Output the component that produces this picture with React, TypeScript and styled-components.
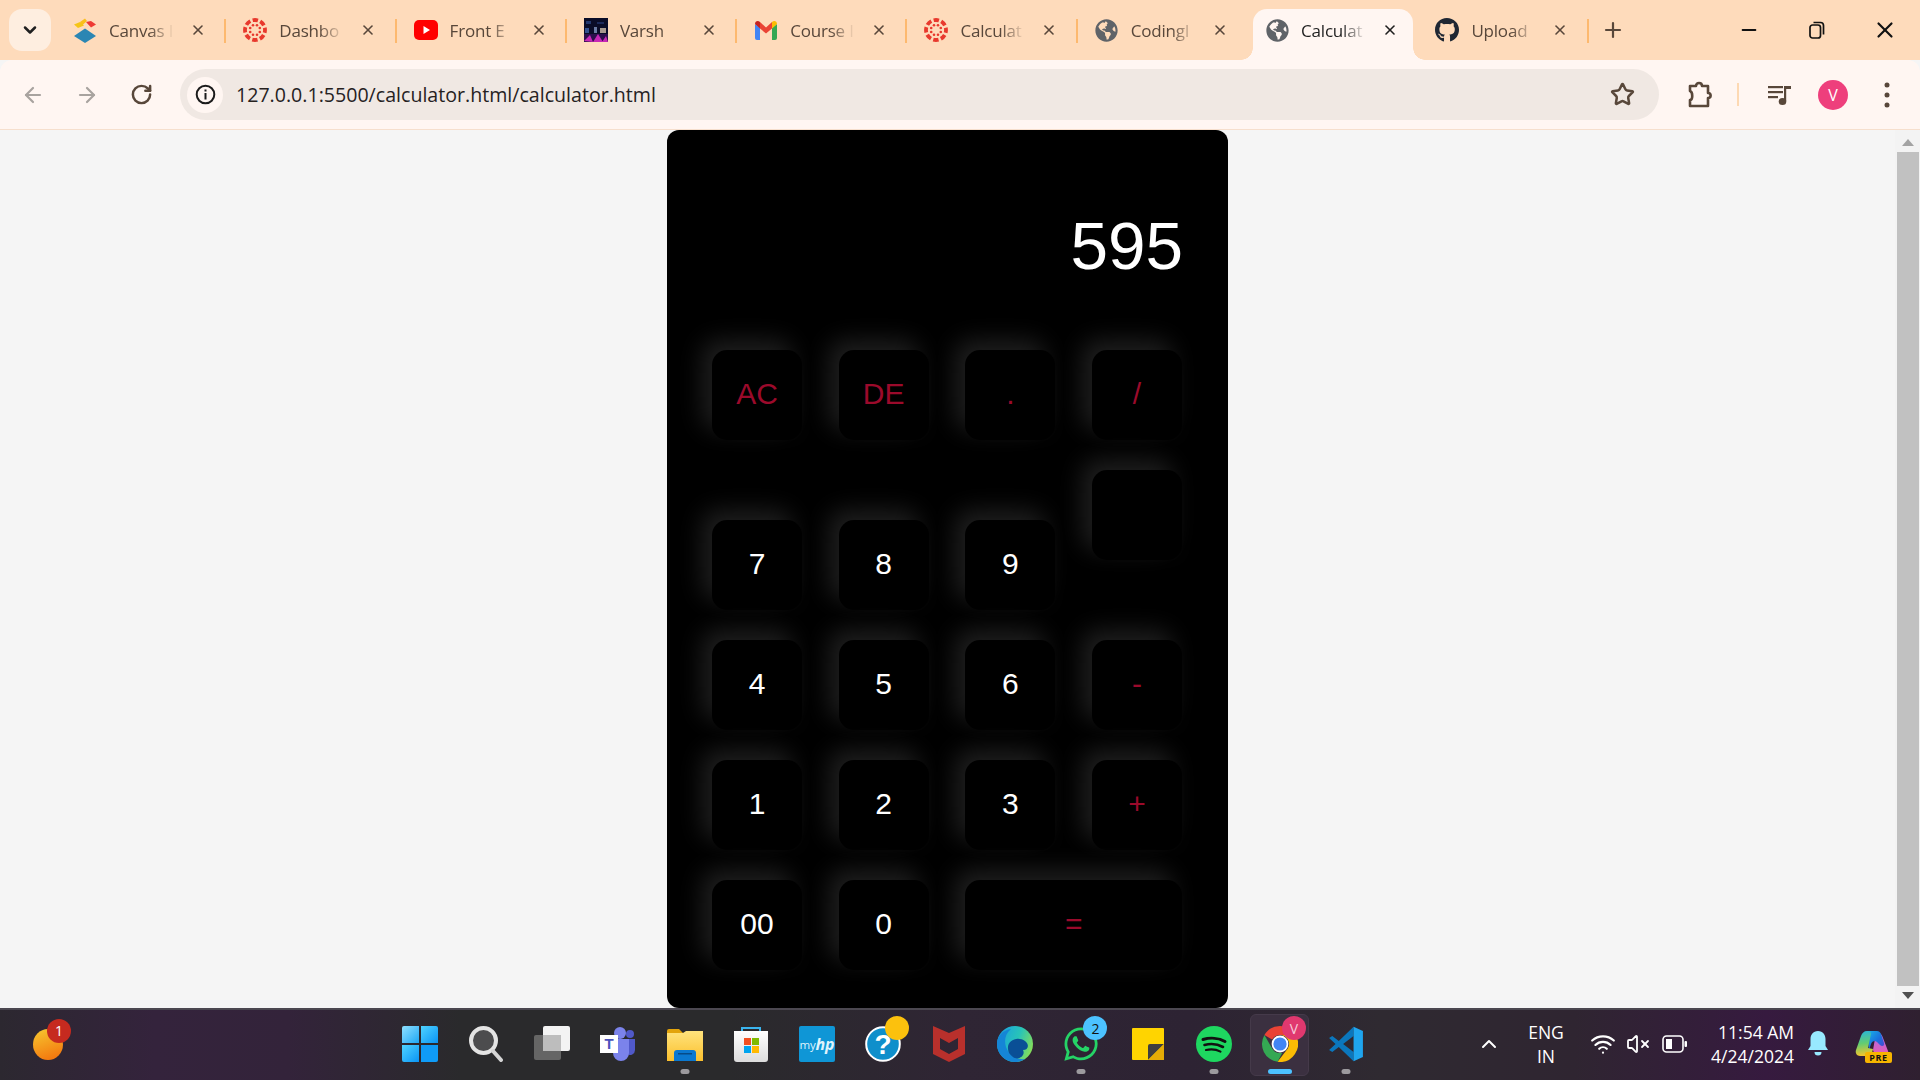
import React from "react";
import styled, { createGlobalStyle } from "styled-components";
import {
  ArrowLeft, ArrowRight, RotateCw, Star, ChevronDown, ChevronUp, X, Plus, Minus, Wifi, VolumeX,
} from "lucide-react";
import { FaGithub, FaGlobeAmericas, FaWhatsapp } from "react-icons/fa";

const Global = createGlobalStyle`
  html, body { margin: 0; padding: 0; height: 100%; overflow: hidden; background: #f5f5f5; }
  #root { height: 100%; }
  * { box-sizing: border-box; }
`;

const UI = `"Open Sans", "Noto Sans", "Liberation Sans", sans-serif`;

const Shell = styled.div`
  width: 1920px; height: 1080px; display: flex; flex-direction: column; overflow: hidden; font-family: ${UI};
`;

/* ---------- tab strip ---------- */
const TabStrip = styled.div`
  height: 60px; flex: none; background: #fedbbb; display: flex; align-items: stretch; padding-left: 9px;
`;
const TabSearch = styled.div`
  width: 42px; height: 42px; margin: 9px 5px 0 0; border-radius: 13px; background: #feeee0; color: #1f1f1f;
  display: flex; align-items: center; justify-content: center;
`;
const Tab = styled.div<{ $active?: boolean }>`
  position: relative; width: 168.3px; flex: none; display: flex; align-items: center; padding: 2px 0 0 17px;
  & > * { position: relative; z-index: 1; }
  ${(p) => p.$active && `
    &::before {
      content: ""; position: absolute; left: 5px; right: 3px; top: 9px; bottom: 0;
      background: #fff6f2; border-radius: 14px 14px 0 0;
    }
  `}
`;
const Flare = styled.i<{ $side: "left" | "right" }>`
  position: absolute !important; bottom: 0; width: 12px; height: 12px;
  ${(p) => p.$side === "left"
    ? `left: -7px; background: radial-gradient(circle at 0 0, transparent 11.5px, #fff6f2 12px);`
    : `right: -9px; background: radial-gradient(circle at 100% 0, transparent 11.5px, #fff6f2 12px);`}
`;
const TabSep = styled.div<{ $hidden?: boolean }>`
  width: 2px; height: 24px; margin-top: 19px; flex: none; background: ${(p) => (p.$hidden ? "transparent" : "#fdb96f")};
`;
const Fav = styled.span`
  width: 24px; height: 24px; flex: none; display: flex; align-items: center; justify-content: center; margin-top: -2px;
`;
const TabTitle = styled.span<{ $active?: boolean }>`
  width: 65px; margin-left: 12px; flex: none; white-space: nowrap; font-size: 17px; line-height: 22px; letter-spacing: -0.2px;
  color: ${(p) => (p.$active ? "#1f1f1f" : "#58473a")};
  -webkit-mask-image: linear-gradient(90deg, #000 62%, transparent 100%);
  mask-image: linear-gradient(90deg, #000 62%, transparent 100%);
`;
const TabClose = styled.span<{ $active?: boolean }>`
  width: 16px; height: 16px; margin: -2px 0 0 16px; flex: none; display: flex; align-items: center; justify-content: center;
  color: ${(p) => (p.$active ? "#1f1f1f" : "#58473a")};
`;
const NewTab = styled.div`
  width: 40px; margin-left: 4px; color: #58473a; display: flex; align-items: center; justify-content: center;
`;
const WinControls = styled.div`
  margin-left: auto; display: flex; padding-right: 1px;
`;
const WinBtn = styled.div`
  width: 68px; height: 60px; color: #111; display: flex; align-items: center; justify-content: center;
`;

/* ---------- toolbar ---------- */
const Toolbar = styled.div`
  height: 70px; flex: none; background: #fff6f2; border-bottom: 1px solid #f6dfcd; border-radius: 12px 12px 0 0;
  display: flex; align-items: center; padding-left: 6px; color: #58473a;
`;
const ToolBtn = styled.div<{ $muted?: boolean; $gap?: number }>`
  width: 54px; height: 54px; flex: none; display: flex; align-items: center; justify-content: center;
  margin-left: ${(p) => p.$gap ?? 0}px;
  color: ${(p) => (p.$muted ? "#a8a39f" : "#58473a")};
`;
const Omnibox = styled.div`
  width: 1479px; height: 51px; margin-left: 12px; border-radius: 26px; background: #f0e8e3; flex: none;
  display: flex; align-items: center; padding: 0 24px 0 7px;
`;
const InfoChip = styled.div`
  width: 36px; height: 36px; border-radius: 50%; background: #fff6f2; display: flex; align-items: center; justify-content: center; flex: none;
`;
const Address = styled.span`
  margin-left: 13px; font-size: 19.6px; color: #26221f; flex: 1; white-space: nowrap;
`;
const ToolSep = styled.div`
  width: 2px; height: 23px; margin-left: 10px; background: #fdd9b3; flex: none;
`;
const Avatar = styled.div`
  width: 30px; height: 30px; border-radius: 50%; background: #ee3f7c; color: #fff; font-size: 16px;
  display: flex; align-items: center; justify-content: center;
`;

/* ---------- page ---------- */
const Main = styled.div`
  flex: 1; min-height: 0; display: flex; background: #f5f5f5;
`;
const Page = styled.div`
  flex: 1; display: flex; justify-content: center; align-items: flex-start; min-width: 0;
`;
const Calculator = styled.div`
  width: 561px; height: 878px; background: #000; border-radius: 12px; font-family: "Liberation Sans", Arial, sans-serif;
  padding: 0 46px 0 45px;
`;
const Display = styled.div`
  height: 220px; padding-top: 10px; margin-right: -1px; display: flex; align-items: center; justify-content: flex-end;
  color: #fff; font-size: 67.5px;
`;
const Keys = styled.div`
  display: grid; grid-template-columns: repeat(4, 90px); column-gap: 36.67px;
  grid-template-rows: 90px 140px 90px 90px 90px; row-gap: 30px;
`;
const Key = styled.div<{ $op?: boolean; $wide?: boolean; $raised?: boolean }>`
  width: ${(p) => (p.$wide ? "217px" : "90px")}; height: 90px; border-radius: 15px; background: #000;
  grid-column: ${(p) => (p.$wide ? "span 2" : "auto")};
  align-self: ${(p) => (p.$raised ? "start" : "end")};
  display: flex; align-items: center; justify-content: center; font-size: 30px; padding-bottom: 2px;
  color: ${(p) => (p.$op ? "#9b0a2b" : "#fff")};
  box-shadow: -10px -10px 25px rgba(255, 255, 255, 0.12), 5px 5px 15px rgba(255, 255, 255, 0.012);
`;

const ScrollBar = styled.div`
  width: 25px; flex: none; background: #f3f3f3; display: flex; flex-direction: column; align-items: center; padding: 9px 0 9px;
`;
const ScrollThumb = styled.div`
  width: 22px; flex: 1; background: #c1c1c1; margin: 6px 0;
`;
const ScrollArrow = styled.div<{ $down?: boolean }>`
  width: 0; height: 0; border-left: 6px solid transparent; border-right: 6px solid transparent; flex: none;
  ${(p) => (p.$down ? "border-top: 7px solid #505050;" : "border-bottom: 7px solid #a3a3a3;")}
`;

/* ---------- taskbar ---------- */
const Taskbar = styled.div`
  height: 72px; flex: none; border-top: 2px solid #4b4750; display: flex; align-items: stretch; color: #fff;
  background: linear-gradient(90deg, #2c2830 0%, #34233c 8%, #33233a 15%, #2a2a2c 24%, #2a2a2c 38%, #2f2534 50%, #2d2333 62%, #2f2a31 72%, #2f2531 82%, #361a3f 92%, #2f2030 100%);
`;
const LeftZone = styled.div`
  width: 387px; flex: none; display: flex; align-items: center; padding: 0 0 2px 33px;
`;
const Weather = styled.div`
  position: relative; width: 30px; height: 31px; border-radius: 50%;
  background: linear-gradient(160deg, #f6c02c 10%, #f47b10 85%);
`;
const CountBadge = styled.span<{ $bg: string; $fg?: string }>`
  position: absolute; top: -10px; right: -8px; width: 24px; height: 24px; border-radius: 50%; background: ${(p) => p.$bg};
  color: ${(p) => p.$fg ?? "#fff"}; font-size: 14px; display: flex; align-items: center; justify-content: center; font-family: ${UI};
`;
const Slot = styled.div`
  position: relative; width: 66.15px; flex: none; display: flex; align-items: center; justify-content: center; padding-bottom: 2px;
`;
const SlotIcon = styled.div`
  position: relative; width: 36px; height: 36px; display: flex; align-items: center; justify-content: center;
`;
const ActiveBox = styled.div`
  position: absolute; left: 3px; right: 4px; top: 4px; bottom: 4px; background: #3b3040; border: 1px solid #453a4a; border-radius: 6px;
`;
const RunDot = styled.span<{ $active?: boolean }>`
  position: absolute; bottom: 6px; left: 50%; transform: translateX(-50%); height: 5px; border-radius: 3px;
  width: ${(p) => (p.$active ? "24px" : "9px")}; background: ${(p) => (p.$active ? "#4cc2ff" : "#9c9a9e")};
`;
const MyHp = styled.div`
  width: 36px; height: 36px; border-radius: 2px; background: #0f96d6; color: #dff3fc; font-size: 11.5px;
  display: flex; align-items: center; justify-content: center; letter-spacing: -0.2px;
  b { font-style: italic; font-size: 16px; }
`;
const Tray = styled.div`
  margin-left: auto; display: flex; align-items: center; padding-bottom: 2px;
`;
const TrayIcon = styled.div<{ $w: number }>`
  width: ${(p) => p.$w}px; flex: none; display: flex; align-items: center; justify-content: center;
`;
const TrayText = styled.div<{ $align: string; $w: number }>`
  width: ${(p) => p.$w}px; flex: none; text-align: ${(p) => p.$align}; font-size: 17.5px; line-height: 24px; white-space: nowrap;
`;
const PreBadge = styled.span`
  position: absolute; right: -2px; bottom: -1px; width: 27px; height: 11px; border-radius: 2px; background: #f7b500; color: #111;
  font-size: 9px; font-weight: 700; line-height: 11px; text-align: center; letter-spacing: 0.6px;
`;

/* ---------- drawings ---------- */
const RingIcon = () => (
  <svg width="24" height="24" viewBox="0 0 24 24">
    <circle cx="12" cy="12" r="10" fill="none" stroke="#e8392d" strokeWidth="3.8" strokeDasharray="5.4 2.454" strokeDashoffset="2.7" />
    {Array.from({ length: 8 }).map((_, i) => {
      const a = (i * Math.PI) / 4 + Math.PI / 8;
      return <circle key={i} cx={12 + 5.2 * Math.cos(a)} cy={12 + 5.2 * Math.sin(a)} r="1.3" fill="#e8392d" />;
    })}
  </svg>
);
const StackIcon = () => (
  <svg width="24" height="25" viewBox="0 0 24 25">
    <path d="M7 4 12 0.5 14 3 9 7.5z" fill="#fbbf1c" />
    <path d="M13 4 18 3 23 6.5 18 9.5z" fill="#ee3a33" />
    <path d="M1 18 12 10.5 23 18 12 25z" fill="#2b86b3" />
    <path d="M1 6.5 7 4 11 7.5 5 10z" fill="#f5c518" />
  </svg>
);
const YouTubeIcon = () => (
  <svg width="24" height="20" viewBox="0 0 24 20">
    <rect width="24" height="20" rx="5" fill="#f00" />
    <path d="M9.5 6 16 10l-6.500 4z" fill="#fff" />
  </svg>
);
const VarshIcon = () => (
  <svg width="24" height="24" viewBox="0 0 24 24">
    <rect width="24" height="24" fill="#0a0d28" />
    <rect x="2" y="3" width="5" height="3" fill="#23386e" /><rect x="13" y="4" width="7" height="2" fill="#1c2b5c" />
    <rect x="10" y="9" width="3" height="6" fill="#6a7ba3" /><rect x="16" y="10" width="6" height="5" fill="#a89a8e" />
    <rect x="1" y="10" width="4" height="5" fill="#34508f" />
    <rect y="16" width="24" height="8" fill="#2c0f4c" />
    <path d="M0 23 6 17l3 7zM9 24l5-8 5 8zM18 24l4-6 2 6z" fill="#c728b6" />
  </svg>
);
const GmailIcon = () => (
  <svg width="22" height="20" viewBox="0 0 22 20">
    <path d="M0 4v14a2 2 0 0 0 2 2h3V8z" fill="#4285f4" />
    <path d="M22 4v14a2 2 0 0 1-2 2h-3V8z" fill="#34a853" />
    <path d="M5 2 11 7.500 17 2v6.500l-6 5-6-5z" fill="#ea4335" />
    <path d="M0 4C0 1 3 0 5 2v6.500L0 4z" fill="#c5221f" />
    <path d="M22 4c0-3-3-4-5-2v6.500L22 4z" fill="#fbbc04" />
  </svg>
);
const ExtensionIcon = () => (
  <svg width="26" height="30" viewBox="0 0 26 30" fill="none" stroke="#58473a" strokeWidth="2.6" strokeLinejoin="round">
    <path d="M3 6h6c0-4 6-4 6 0h6v7c3.500 0 3.500 5 0 5v8H3v-6c3 0 3-8 0-9z" />
  </svg>
);
const MediaIcon = () => (
  <svg width="24" height="24" viewBox="0 0 24 24" fill="#58473a">
    <rect x="0" y="3" width="15" height="2.200" /><rect x="0" y="8" width="15" height="2.200" /><rect x="0" y="13" width="10" height="2.200" />
    <rect x="16" y="4" width="2.200" height="14" /><rect x="16" y="3" width="7" height="3" />
    <ellipse cx="14.500" cy="18.500" rx="3.800" ry="3.500" />
  </svg>
);
const InfoIcon = () => (
  <svg width="21" height="21" viewBox="0 0 21 21">
    <circle cx="10.500" cy="10.500" r="8.800" fill="none" stroke="#1b1b1b" strokeWidth="2" />
    <rect x="9.500" y="9" width="2" height="6.500" fill="#1b1b1b" /><rect x="9.500" y="5.500" width="2" height="2" fill="#1b1b1b" />
  </svg>
);
const Kebab = () => (
  <svg width="8" height="28" viewBox="0 0 8 28" fill="#58473a">
    <circle cx="4" cy="4" r="2.500" /><circle cx="4" cy="14" r="2.500" /><circle cx="4" cy="24" r="2.500" />
  </svg>
);
const RestoreIcon = () => (
  <svg width="16" height="18" viewBox="0 0 16 18" fill="none" stroke="#111" strokeWidth="1.700">
    <rect x="1" y="4" width="10.500" height="13" rx="2.500" />
    <path d="M4.500 1.500h7a3 3 0 0 1 3 3v9" />
  </svg>
);
const WindowsIcon = () => (
  <svg width="36" height="36" viewBox="0 0 36 36">
    <defs>
      <linearGradient id="wa" x1="0" y1="0" x2="1" y2="1"><stop offset="0" stopColor="#8fe0ff" /><stop offset="1" stopColor="#1ea7f5" /></linearGradient>
      <linearGradient id="wb" x1="0" y1="0" x2="1" y2="1"><stop offset="0" stopColor="#4fd3ff" /><stop offset="1" stopColor="#0a94f5" /></linearGradient>
    </defs>
    <path d="M2 0h15v17H0V2a2 2 0 0 1 2-2z" fill="url(#wa)" /><path d="M19 0h15a2 2 0 0 1 2 2v15H19z" fill="url(#wb)" />
    <path d="M0 19h17v17H2a2 2 0 0 1-2-2z" fill="url(#wb)" /><path d="M19 19h17v15a2 2 0 0 1-2 2H19z" fill="#0f9bf7" />
  </svg>
);
const SearchIcon = () => (
  <svg width="34" height="36" viewBox="0 0 34 36">
    <circle cx="14.500" cy="14.500" r="12.500" fill="#4c4c4e" stroke="#e4e4e4" strokeWidth="4" />
    <path d="M24 25l8 9" stroke="#d5d5d5" strokeWidth="4" strokeLinecap="round" />
  </svg>
);
const TaskViewIcon = () => (
  <svg width="36" height="36" viewBox="0 0 36 36">
    <rect x="9" y="0" width="27" height="25" rx="2" fill="#f3f3f3" />
    <rect x="0" y="9" width="27" height="25" rx="2" fill="#6b6b6b" fillOpacity=".9" />
    <rect x="9" y="9" width="18" height="16" fill="#bdbdbd" />
  </svg>
);
const TeamsIcon = () => (
  <svg width="36" height="34" viewBox="0 0 36 34">
    <circle cx="20" cy="6" r="6" fill="#7b83eb" /><circle cx="30" cy="7" r="4" fill="#5059c9" />
    <path d="M25 12h10v11a5 5 0 0 1-8 4z" fill="#5059c9" />
    <path d="M11 12h18v14a8 8 0 0 1-16 0z" fill="#7b83eb" />
    <rect x="0" y="8" width="18" height="18" fill="#fff" />
    <text x="9" y="22" textAnchor="middle" fontSize="15" fontWeight="700" fontFamily="Liberation Sans" fill="#4b53bc">T</text>
  </svg>
);
const ExplorerIcon = () => (
  <svg width="36" height="33" viewBox="0 0 36 33">
    <path d="M0 3a2 2 0 0 1 2-2h10l4 4h-16z" fill="#e3a40c" />
    <path d="M0 5h16l3-2h17v30H0z" fill="url(#fold)" />
    <defs><linearGradient id="fold" x1="0" y1="0" x2="0" y2="1"><stop offset="0" stopColor="#ffe37d" /><stop offset="1" stopColor="#fbc02d" /></linearGradient></defs>
    <path d="M7 33V25a3 3 0 0 1 3-3h16a3 3 0 0 1 3 3v8z" fill="#0b78d0" />
    <rect x="11" y="25" width="14" height="1.500" fill="#064b88" />
  </svg>
);
const StoreIcon = () => (
  <svg width="36" height="36" viewBox="0 0 36 36">
    <defs><linearGradient id="bag" x1="0" y1="0" x2="0" y2="1"><stop offset="0" stopColor="#fff" /><stop offset="1" stopColor="#dcdcdc" /></linearGradient></defs>
    <path d="M9 8V2h18v6" fill="none" stroke="#3ab4ee" strokeWidth="2" />
    <path d="M1 5h34v28a3 3 0 0 1-3 3H4a3 3 0 0 1-3-3z" fill="url(#bag)" />
    <rect x="11" y="12" width="7" height="7" fill="#f25022" /><rect x="19" y="12" width="7" height="7" fill="#7fba00" />
    <rect x="11" y="20" width="7" height="7" fill="#00a4ef" /><rect x="19" y="20" width="7" height="7" fill="#ffb900" />
  </svg>
);
const HelpIcon = () => (
  <svg width="36" height="36" viewBox="0 0 36 36">
    <circle cx="18" cy="18" r="16.800" fill="#0f8fcb" stroke="#fff" strokeWidth="2" />
    <text x="18" y="28" textAnchor="middle" fontSize="28" fontWeight="700" fontFamily="Liberation Sans" fill="#fff">?</text>
  </svg>
);
const McAfeeIcon = () => (
  <svg width="32" height="36" viewBox="0 0 32 36">
    <path fillRule="evenodd" fill="#b8302c" d="M0 0l16 7 16-7v28l-16 8-16-8zM7 12v11l9 5 9-5V12l-9 5z" />
  </svg>
);
const EdgeIcon = () => (
  <svg width="36" height="36" viewBox="0 0 36 36">
    <defs><linearGradient id="edg" x1="0" y1=".2" x2="1" y2=".6"><stop offset="0" stopColor="#1a9fe0" /><stop offset=".55" stopColor="#28c4b8" /><stop offset="1" stopColor="#86dd58" /></linearGradient></defs>
    <circle cx="18" cy="18" r="18" fill="url(#edg)" />
    <path d="M18 36C8 36 0 28 0 18 0 10 6 4 14 3 8 8 7 15 9 21c3 8 10 13 19 12-3 2-6 3-10 3z" fill="#1585d6" />
    <path d="M11 23c-1-9 10-13 17-8 5 4 3 9-2 9 3 6-5 11-10 7-3-2-5-5-5-8z" fill="#0a4f96" />
  </svg>
);
const StickyIcon = () => (
  <svg width="32" height="32" viewBox="0 0 32 32">
    <rect width="32" height="32" rx="1" fill="#ffd400" />
    <path d="M16 32V18a2 2 0 0 1 2-2h14z" fill="#3f3f3f" />
    <path d="M16 32l16-16v15a1 1 0 0 1-1 1z" fill="#e5ac06" />
  </svg>
);
const SpotifyIcon = () => (
  <svg width="36" height="36" viewBox="0 0 36 36">
    <circle cx="18" cy="18" r="18" fill="#1ed760" />
    <g fill="none" stroke="#111" strokeLinecap="round">
      <path d="M7 13.500c7-2 16-1.500 22 2" strokeWidth="3" />
      <path d="M8.500 19c6-1.600 13-1 18.500 2" strokeWidth="2.600" />
      <path d="M10 24c5-1.200 10-.8 14.500 1.600" strokeWidth="2.200" />
    </g>
  </svg>
);
const ChromeIcon = () => (
  <svg width="36" height="36" viewBox="0 0 24 24">
    <path d="M1.610 6 6.800 15A6 6 0 0 0 13.500 17.800L10.400 23.900A12 12 0 0 1 1.610 6z" fill="#34a853" />
    <path d="M22.390 6H12A6 6 0 0 1 17.200 15L10.400 23.900A12 12 0 0 0 22.390 6z" fill="#fbbc04" />
    <path d="M12 0A12 12 0 0 1 22.390 6H12A6 6 0 0 0 6.800 9L1.610 6A12 12 0 0 1 12 0z" fill="#ea4335" />
    <circle cx="12" cy="12" r="5.600" fill="#fff" /><circle cx="12" cy="12" r="4.400" fill="#4285f4" />
  </svg>
);
const VSCodeIcon = () => (
  <svg width="36" height="36" viewBox="0 0 100 100">
    <path d="M71 2 30 42 12 28 3 33 21 50 3 67 12 72 30 58 71 98V72L42 50 71 28z" fill="#0b77bd" />
    <path d="M71 2 97 14V86L71 98z" fill="#1fa5ee" />
  </svg>
);
const BatteryIcon = () => (
  <svg width="26" height="20" viewBox="0 0 26 20" fill="none">
    <rect x="1" y="2" width="20" height="16" rx="3.500" stroke="#fff" strokeWidth="1.600" />
    <rect x="4" y="5" width="6" height="10" fill="#fff" />
    <rect x="22.500" y="7" width="2.500" height="6" rx="1" fill="#fff" />
  </svg>
);
const BellIcon = () => (
  <svg width="20" height="28" viewBox="0 0 20 28" fill="#98e9ff">
    <path d="M10 1c5 0 7.500 4 7.500 8v7l2.500 4H0l2.500-4V9c0-4 2.500-8 7.500-8z" />
    <path d="M6.500 22h7a3.500 3.500 0 0 1-7 0z" />
  </svg>
);
const CopilotIcon = () => (
  <svg width="34" height="28" viewBox="0 0 34 28">
    <defs>
      <linearGradient id="cpa" x1="0" y1="0" x2="1" y2="1"><stop offset="0" stopColor="#18b4e8" /><stop offset=".55" stopColor="#1a6fdc" /><stop offset="1" stopColor="#5b3fd0" /></linearGradient>
      <linearGradient id="cpb" x1=".3" y1="0" x2=".4" y2="1"><stop offset="0" stopColor="#2ab6d8" /><stop offset=".5" stopColor="#62cc72" /><stop offset="1" stopColor="#f8c52a" /></linearGradient>
      <linearGradient id="cpc" x1="0" y1="0" x2="0" y2="1"><stop offset="0" stopColor="#a86ee8" /><stop offset="1" stopColor="#e85ab0" /></linearGradient>
    </defs>
    <path d="M21 3h2c3 0 4 2 5 5l5 13c1 3-1 5-4 5h-9l-2-6z" fill="url(#cpc)" />
    <path d="M12 1h10c2 0 3 1 4 3l3 9c1 3-2 4-4 2l-3-3c-2-2-5-1-6 2l-2 6z" fill="url(#cpa)" />
    <path d="M12 1C9 1 7 3 6 6L1 20c-1 3 1 6 4 6h8c2 0 3-1 4-3l1-4-5-1 1-5 2-9c0-2-1-3-3-3z" fill="url(#cpb)" />
  </svg>
);

const tabs: { title: string; icon: React.ReactNode; active?: boolean; noSep?: boolean }[] = [
  { title: "Canvas I", icon: <StackIcon /> },
  { title: "Dashbo", icon: <RingIcon /> },
  { title: "Front E", icon: <YouTubeIcon /> },
  { title: "Varsh", icon: <VarshIcon /> },
  { title: "Course I", icon: <GmailIcon /> },
  { title: "Calculat", icon: <RingIcon /> },
  { title: "CodingI", icon: <FaGlobeAmericas size={23} color="#5f6368" />, noSep: true },
  { title: "Calculat", icon: <FaGlobeAmericas size={23} color="#5f6368" />, active: true, noSep: true },
  { title: "Upload", icon: <FaGithub size={26} color="#1f2733" /> },
];

const keys: { label: string; op?: boolean; wide?: boolean; raised?: boolean }[] = [
  { label: "AC", op: true }, { label: "DE", op: true }, { label: ".", op: true }, { label: "/", op: true },
  { label: "7" }, { label: "8" }, { label: "9" }, { label: "", raised: true },
  { label: "4" }, { label: "5" }, { label: "6" }, { label: "-", op: true },
  { label: "1" }, { label: "2" }, { label: "3" }, { label: "+", op: true },
  { label: "00" }, { label: "0" }, { label: "=", op: true, wide: true },
];

export default function App() {
  return (
    <Shell>
      <Global />
      <TabStrip>
        <TabSearch><ChevronDown size={20} strokeWidth={3} /></TabSearch>
        {tabs.map((t, i) => (
          <React.Fragment key={i}>
            <Tab $active={t.active}>
              {t.active && <Flare $side="left" />}
              <Fav>{t.icon}</Fav>
              <TabTitle $active={t.active}>{t.title}</TabTitle>
              <TabClose $active={t.active}><X size={20} strokeWidth={2.4} /></TabClose>
              {t.active && <Flare $side="right" />}
            </Tab>
            <TabSep $hidden={t.noSep} />
          </React.Fragment>
        ))}
        <NewTab><Plus size={24} strokeWidth={2.2} /></NewTab>
        <WinControls>
          <WinBtn><Minus size={22} strokeWidth={2} /></WinBtn>
          <WinBtn><RestoreIcon /></WinBtn>
          <WinBtn><X size={26} strokeWidth={2} /></WinBtn>
        </WinControls>
      </TabStrip>
      <Toolbar>
        <ToolBtn $muted><ArrowLeft size={24} strokeWidth={2.2} /></ToolBtn>
        <ToolBtn $muted><ArrowRight size={24} strokeWidth={2.2} /></ToolBtn>
        <ToolBtn><RotateCw size={23} strokeWidth={2.6} /></ToolBtn>
        <Omnibox>
          <InfoChip><InfoIcon /></InfoChip>
          <Address>127.0.0.1:5500/calculator.html/calculator.html</Address>
          <Star size={25} strokeWidth={2.4} color="#58473a" />
        </Omnibox>
        <ToolBtn $gap={14}><ExtensionIcon /></ToolBtn>
        <ToolSep />
        <ToolBtn $gap={14}><MediaIcon /></ToolBtn>
        <ToolBtn $gap={-1}><Avatar>V</Avatar></ToolBtn>
        <ToolBtn><Kebab /></ToolBtn>
      </Toolbar>
      <Main>
        <Page>
          <Calculator>
            <Display>595</Display>
            <Keys>
              {keys.map((k, i) => (
                <Key key={i} $op={k.op} $wide={k.wide} $raised={k.raised}>{k.label}</Key>
              ))}
            </Keys>
          </Calculator>
        </Page>
        <ScrollBar>
          <ScrollArrow />
          <ScrollThumb />
          <ScrollArrow $down />
        </ScrollBar>
      </Main>
      <Taskbar>
        <LeftZone>
          <Weather><CountBadge $bg="#c62a1f">1</CountBadge></Weather>
        </LeftZone>
        <Slot><SlotIcon><WindowsIcon /></SlotIcon></Slot>
        <Slot><SlotIcon><SearchIcon /></SlotIcon></Slot>
        <Slot><SlotIcon><TaskViewIcon /></SlotIcon></Slot>
        <Slot><SlotIcon><TeamsIcon /></SlotIcon></Slot>
        <Slot><SlotIcon><ExplorerIcon /></SlotIcon><RunDot /></Slot>
        <Slot><SlotIcon><StoreIcon /></SlotIcon></Slot>
        <Slot><SlotIcon><MyHp>my<b>hp</b></MyHp></SlotIcon></Slot>
        <Slot><SlotIcon><HelpIcon /><CountBadge $bg="#fcc10d" /></SlotIcon></Slot>
        <Slot><SlotIcon><McAfeeIcon /></SlotIcon></Slot>
        <Slot><SlotIcon><EdgeIcon /></SlotIcon></Slot>
        <Slot><SlotIcon><FaWhatsapp size={38} color="#25d366" /><CountBadge $bg="#4cc2ff" $fg="#111">2</CountBadge></SlotIcon><RunDot /></Slot>
        <Slot><SlotIcon><StickyIcon /></SlotIcon></Slot>
        <Slot><SlotIcon><SpotifyIcon /></SlotIcon><RunDot /></Slot>
        <Slot>
          <ActiveBox />
          <SlotIcon><ChromeIcon /><CountBadge $bg="#e0386f" $fg="#f7c9d8">V</CountBadge></SlotIcon>
          <RunDot $active />
        </Slot>
        <Slot><SlotIcon><VSCodeIcon /></SlotIcon><RunDot /></Slot>
        <Tray>
          <TrayIcon $w={34}><ChevronUp size={24} strokeWidth={2} /></TrayIcon>
          <TrayText $align="center" $w={80}>ENG<br />IN</TrayText>
          <TrayIcon $w={34}><Wifi size={26} strokeWidth={2} /></TrayIcon>
          <TrayIcon $w={36}><VolumeX size={24} strokeWidth={1.800} /></TrayIcon>
          <TrayIcon $w={38}><BatteryIcon /></TrayIcon>
          <TrayText $align="right" $w={100}>11:54 AM<br />4/24/2024</TrayText>
          <TrayIcon $w={48}><BellIcon /></TrayIcon>
          <TrayIcon $w={60}>
            <SlotIcon><CopilotIcon /><PreBadge>PRE</PreBadge></SlotIcon>
          </TrayIcon>
          <TrayIcon $w={18} />
        </Tray>
      </Taskbar>
    </Shell>
  );
}
